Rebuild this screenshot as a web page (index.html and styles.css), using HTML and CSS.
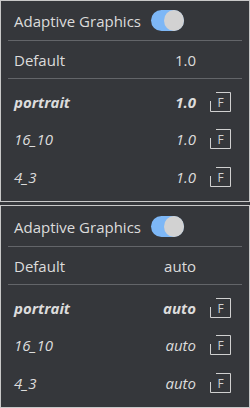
FILE: index.html
```
<!DOCTYPE html>
<html>

<head>
    <title>Adaptive Graphics</title>
    <meta charset="utf-8">
    <meta name="viewport" content="width=device-width, initial-scale=1.0">
    <link rel="stylesheet" href="styles.css">
</head>

<body>
    <section class="panel">
        <div class="hoved">
            <span>Adaptive Graphics</span>
            <span class="kontakt"><span class="knop"></span></span>
        </div>
        <div class="raekke standard">
            <span>Default</span>
            <span class="vaerdi">1.0</span>
            <span></span>
        </div>
        <div class="liste">
            <div class="raekke valgt">
                <span>portrait</span>
                <span class="vaerdi">1.0</span>
                <svg class="fast" viewBox="0 0 21 20"><path d="M6 0.5H20.5V19.5H0.5V9"/><text x="10.5" y="14.5">F</text></svg>
            </div>
            <div class="raekke">
                <span>16_10</span>
                <span class="vaerdi">1.0</span>
                <svg class="fast" viewBox="0 0 21 20"><path d="M6 0.5H20.5V19.5H0.5V9"/><text x="10.5" y="14.5">F</text></svg>
            </div>
            <div class="raekke">
                <span>4_3</span>
                <span class="vaerdi">1.0</span>
                <svg class="fast" viewBox="0 0 21 20"><path d="M6 0.5H20.5V19.5H0.5V9"/><text x="10.5" y="14.5">F</text></svg>
            </div>
        </div>
    </section>

    <section class="panel nummer2">
        <div class="hoved">
            <span>Adaptive Graphics</span>
            <span class="kontakt"><span class="knop"></span></span>
        </div>
        <div class="raekke standard">
            <span>Default</span>
            <span class="vaerdi">auto</span>
            <span></span>
        </div>
        <div class="liste">
            <div class="raekke valgt">
                <span>portrait</span>
                <span class="vaerdi">auto</span>
                <svg class="fast" viewBox="0 0 21 20"><path d="M6 0.5H20.5V19.5H0.5V9"/><text x="10.5" y="14.5">F</text></svg>
            </div>
            <div class="raekke">
                <span>16_10</span>
                <span class="vaerdi">auto</span>
                <svg class="fast" viewBox="0 0 21 20"><path d="M6 0.5H20.5V19.5H0.5V9"/><text x="10.5" y="14.5">F</text></svg>
            </div>
            <div class="raekke">
                <span>4_3</span>
                <span class="vaerdi">auto</span>
                <svg class="fast" viewBox="0 0 21 20"><path d="M6 0.5H20.5V19.5H0.5V9"/><text x="10.5" y="14.5">F</text></svg>
            </div>
        </div>
    </section>
</body></html>
```

FILE: styles.css
```
body {
    margin: 0;
    background-color: #35373b;
    color: #dcdcdc;
    font-family: "Open Sans", "Noto Sans", sans-serif;
    font-size: 15px;
}

.panel {
    box-sizing: border-box;
    height: 202px;
    margin-bottom: 3px;
    padding: 0 7px;
    border: 1px solid #c8c8c8;
    background-color: #35373b;
}

.nummer2 {
    height: 203px;
    padding-top: 1px;
}

.hoved {
    height: 39px;
    display: flex;
    align-items: center;
    gap: 10px;
    padding-left: 6px;
    border-bottom: 1px solid #636569;
}

.kontakt {
    width: 33px;
    height: 21px;
    border-radius: 11px;
    background-color: #7db7f6;
    display: flex;
    justify-content: flex-end;
}

.knop {
    width: 20px;
    height: 21px;
    border-radius: 50%;
    background-color: #d2d2d2;
}

.raekke {
    height: 37.5px;
    display: grid;
    grid-template-columns: 1fr auto 21px;
    column-gap: 14px;
    align-items: center;
    padding: 0 11px 0 6px;
    font-style: italic;
}

.standard {
    height: 37px;
    font-style: normal;
    border-bottom: 1px solid #636569;
}

.liste {
    padding-top: 4px;
}

.valgt {
    font-weight: bold;
}

.vaerdi {
    text-align: right;
}

.fast {
    width: 21px;
    height: 20px;
}

.fast path {
    fill: none;
    stroke: #d0d0d0;
    stroke-width: 1;
}

.fast text {
    fill: #d0d0d0;
    font-family: "Open Sans", sans-serif;
    font-size: 12px;
    font-style: normal;
    font-weight: normal;
    text-anchor: middle;
}
```
